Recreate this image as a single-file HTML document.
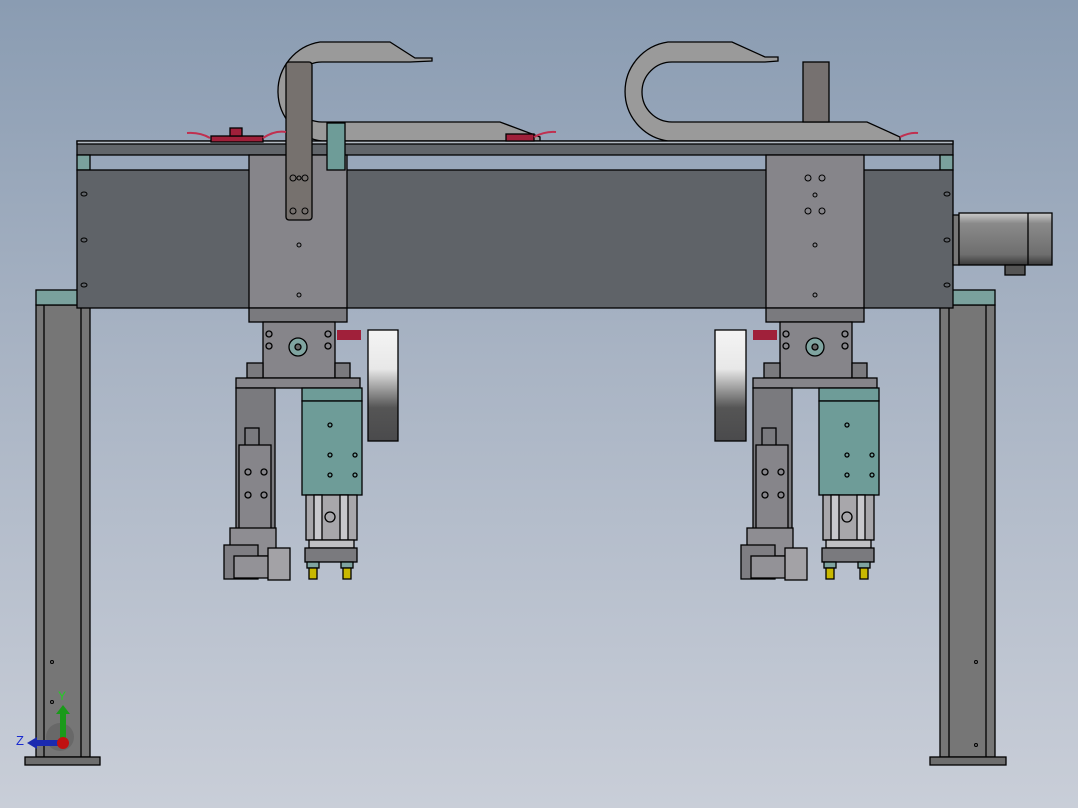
<!DOCTYPE html>
<html><head><meta charset="utf-8"><style>
html,body{margin:0;padding:0;width:1078px;height:808px;overflow:hidden}
body{background:linear-gradient(#8a9cb2 0%,#a9b4c4 45%,#c9ced8 100%)}
svg{display:block}
text{font-family:"Liberation Sans",sans-serif}
</style></head><body>
<svg width="1078" height="808" viewBox="0 0 1078 808" xmlns="http://www.w3.org/2000/svg">
<defs>
<linearGradient id="wh" x1="0" y1="0" x2="0" y2="1">
<stop offset="0" stop-color="#f4f4f4"/><stop offset="0.35" stop-color="#e8e8e8"/><stop offset="0.7" stop-color="#555"/><stop offset="1" stop-color="#4a4a4c"/></linearGradient>
<linearGradient id="mot" x1="0" y1="0" x2="0" y2="1">
<stop offset="0" stop-color="#ccc"/><stop offset="0.2" stop-color="#8a8a8a"/><stop offset="0.8" stop-color="#6e6e6e"/><stop offset="1" stop-color="#3a3a3a"/></linearGradient>
<g id="asm" stroke="#000" stroke-width="1.3">
<rect x="249" y="308" width="98" height="14" fill="#7a7a7e"/>
<rect x="263" y="322" width="72" height="56" fill="#86858a"/>
<circle cx="298" cy="347" r="9" fill="#7fa4a0"/><circle cx="298" cy="347" r="3" fill="#666"/>
<circle cx="269" cy="334" r="3" fill="none"/><circle cx="269" cy="346" r="3" fill="none"/>
<circle cx="328" cy="334" r="3" fill="none"/><circle cx="328" cy="346" r="3" fill="none"/>
<rect x="247" y="363" width="16" height="15" fill="#7a7a7e"/><rect x="335" y="363" width="15" height="15" fill="#7a7a7e"/>
<rect x="236" y="378" width="124" height="10" fill="#86858a"/>
<rect x="236" y="388" width="39" height="142" fill="#7a7a7e"/>
<rect x="245" y="428" width="14" height="18" fill="#7a7a7e"/>
<rect x="239" y="445" width="32" height="85" fill="#86858a"/>
<circle cx="248" cy="472" r="3" fill="none"/><circle cx="264" cy="472" r="3" fill="none"/><circle cx="248" cy="495" r="3" fill="none"/><circle cx="264" cy="495" r="3" fill="none"/>
<rect x="302" y="388" width="60" height="13" fill="#6e9c98"/>
<rect x="302" y="401" width="60" height="94" fill="#6e9c98"/>
<circle cx="330" cy="425" r="2" fill="none"/><circle cx="330" cy="455" r="2" fill="none"/><circle cx="355" cy="455" r="2" fill="none"/><circle cx="330" cy="475" r="2" fill="none"/><circle cx="355" cy="475" r="2" fill="none"/>
<rect x="306" y="495" width="51" height="45" fill="#a8a7ab"/>
<rect x="314" y="495" width="8" height="45" fill="#c8c8cc"/><rect x="340" y="495" width="8" height="45" fill="#c8c8cc"/>
<circle cx="330" cy="517" r="5" fill="none"/>
<rect x="309" y="540" width="45" height="8" fill="#bfbfc2"/>
<rect x="305" y="548" width="52" height="14" fill="#7a7a7e"/>
<rect x="307" y="562" width="12" height="6" fill="#7fa4a0"/><rect x="341" y="562" width="12" height="6" fill="#7fa4a0"/>
<rect x="309" y="568" width="8" height="11" fill="#c8b800"/><rect x="343" y="568" width="8" height="11" fill="#c8b800"/>
<rect x="230" y="528" width="46" height="28" fill="#8e8d92"/>
<rect x="224" y="545" width="34" height="34" fill="#7f7e83"/>
<rect x="234" y="556" width="48" height="22" fill="#939297"/>
<rect x="268" y="548" width="22" height="32" fill="#a3a2a6"/>
</g>
</defs>

<g stroke="#000" stroke-width="1.3">
<rect x="36" y="305" width="54" height="452" fill="#767676"/>
<line x1="44" y1="305" x2="44" y2="757"/><line x1="81" y1="305" x2="81" y2="757"/>
<rect x="36" y="290" width="54" height="15" fill="#7aa19d"/>
<rect x="25" y="757" width="75" height="8" fill="#6e6e6e"/>
<rect x="940" y="305" width="55" height="452" fill="#767676"/>
<line x1="949" y1="305" x2="949" y2="757"/><line x1="986" y1="305" x2="986" y2="757"/>
<rect x="940" y="290" width="55" height="15" fill="#7aa19d"/>
<rect x="930" y="757" width="76" height="8" fill="#6e6e6e"/>

<path d="M320 42 L390 42 L415 58 L432 58 L432 61 L410 62 L322 62 A30 30 0 0 0 322 122 L500 122 L540 137 L540 141 L322 141 A50 50 0 0 1 320 42 Z" fill="#9a9a9a"/>
<path d="M668 42 L732 42 L765 57 L778 57 L778 61 L765 62 L672 62 A30 30 0 0 0 672 122 L867 122 L900 137 L900 141 L668 141 A50 50 0 0 1 668 42 Z" fill="#9a9a9a"/>
<rect x="803" y="62" width="26" height="60" fill="#767170"/>

<rect x="77" y="141" width="876" height="14" fill="#62666b"/>
<rect x="77" y="141" width="876" height="3" fill="#b0b8c0"/>
<rect x="77" y="155" width="13" height="15" fill="#7aa19d"/>
<rect x="940" y="155" width="13" height="15" fill="#7aa19d"/>
<rect x="77" y="170" width="876" height="138" fill="#5f6368"/>
<rect x="249" y="155" width="98" height="153" fill="#86858a"/>
<rect x="766" y="155" width="98" height="153" fill="#86858a"/>
<rect x="286" y="62" width="26" height="158" rx="3" fill="#76716e"/>
<rect x="327" y="123" width="18" height="47" fill="#6e9c98"/>
<rect x="953" y="215" width="6" height="50" fill="#777"/>
<rect x="959" y="213" width="93" height="52" fill="url(#mot)"/>
<line x1="1028" y1="213" x2="1028" y2="265"/>
<rect x="1005" y="265" width="20" height="10" fill="#555"/>
<rect x="211" y="136" width="52" height="6" fill="#a0203a"/><rect x="230" y="128" width="12" height="8" fill="#a0203a"/>
<rect x="506" y="134" width="28" height="7" fill="#a0203a"/>
</g>
<g fill="none" stroke="#000" stroke-width="1">
<ellipse cx="84" cy="194" rx="3" ry="2"/><ellipse cx="84" cy="240" rx="3" ry="2"/><ellipse cx="84" cy="285" rx="3" ry="2"/>
<ellipse cx="947" cy="194" rx="3" ry="2"/><ellipse cx="947" cy="240" rx="3" ry="2"/><ellipse cx="947" cy="285" rx="3" ry="2"/>
<circle cx="299" cy="178" r="2"/><circle cx="299" cy="245" r="2"/><circle cx="299" cy="295" r="2"/>
<circle cx="293" cy="178" r="3"/><circle cx="305" cy="178" r="3"/><circle cx="293" cy="211" r="3"/><circle cx="305" cy="211" r="3"/>
<circle cx="808" cy="178" r="3"/><circle cx="822" cy="178" r="3"/><circle cx="815" cy="195" r="2"/><circle cx="808" cy="211" r="3"/><circle cx="822" cy="211" r="3"/><circle cx="815" cy="245" r="2"/><circle cx="815" cy="295" r="2"/>
<circle cx="52" cy="662" r="1.5"/><circle cx="52" cy="702" r="1.5"/><circle cx="976" cy="662" r="1.5"/><circle cx="976" cy="745" r="1.5"/>
</g>
<path d="M187 133 Q200 132 210 138 M263 138 Q275 130 286 132 M534 137 Q545 131 556 132 M900 137 Q910 132 918 133" stroke="#c03050" stroke-width="2" fill="none"/>

<use href="#asm"/>
<use href="#asm" transform="translate(517 0)"/>
<g stroke="#000" stroke-width="1.3">
<rect x="368" y="330" width="30" height="111" fill="url(#wh)"/>
<rect x="715" y="330" width="31" height="111" fill="url(#wh)"/>
</g>
<rect x="337" y="330" width="24" height="10" fill="#a0203a"/>
<rect x="753" y="330" width="24" height="10" fill="#a0203a"/>

<circle cx="60" cy="737" r="14" fill="#555" opacity="0.4"/>
<rect x="60" y="713" width="6" height="25" fill="#1a9a1a"/>
<polygon points="56,714 63,705 70,714" fill="#1a9a1a"/>
<rect x="36" y="740" width="26" height="6" fill="#1a2ab0"/>
<polygon points="37,737 27,743 37,749" fill="#1a2ab0"/>
<circle cx="63" cy="743" r="6" fill="#c01010"/>
<text x="58" y="700" font-size="12" fill="#20d020">Y</text>
<text x="16" y="745" font-size="13" fill="#1a2ad0">Z</text>
</svg>
</body></html>
